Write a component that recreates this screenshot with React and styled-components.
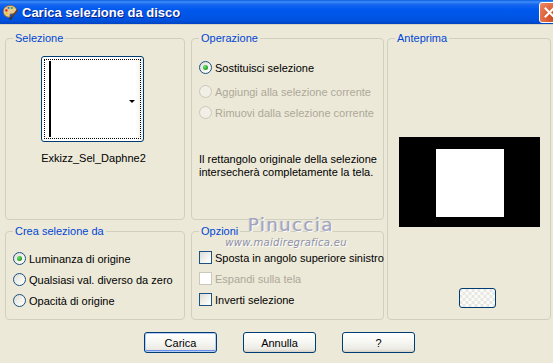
import React from 'react'
import styled, { createGlobalStyle } from 'styled-components'

const GlobalStyle = createGlobalStyle`
  html, body {
    margin: 0;
    padding: 0;
    background: #ECE9D8;
  }
  body {
    font-family: "Liberation Sans", Tahoma, Arial, sans-serif;
    font-size: 11px;
    color: #000;
  }
`

const operations = [
  { label: 'Sostituisci selezione', checked: true },
  { label: 'Aggiungi alla selezione corrente', disabled: true },
  { label: 'Rimuovi dalla selezione corrente', disabled: true },
]

const sources = [
  { label: 'Luminanza di origine', checked: true },
  { label: 'Qualsiasi val. diverso da zero' },
  { label: 'Opacità di origine' },
]

const options = [
  { label: 'Sposta in angolo superiore sinistro' },
  { label: 'Espandi sulla tela', disabled: true },
  { label: 'Inverti selezione' },
]

const AppIcon = () => (
  <svg width="16" height="16" viewBox="0 0 16 16">
    <path d="M8 1.5C4 1.5 1.2 4 1.2 7.4c0 3.4 2.6 5.8 5.6 5.8 1.3 0 1.6-.8 1.2-1.6-.4-.9.1-1.7 1.1-1.7h1.6c2.3 0 3.900-1.3 3.900-3.4C14.6 3.6 11.8 1.5 8 1.5z" fill="#E8C98E" stroke="#7A5A2A" strokeWidth="0.8" />
    <circle cx="4.4" cy="6.4" r="1.2" fill="#D8261B" />
    <circle cx="6.6" cy="3.9" r="1.1" fill="#2A7BE0" />
    <circle cx="9.8" cy="4" r="1.1" fill="#2DA83A" />
    <circle cx="4.6" cy="9.6" r="1.1" fill="#F2C418" />
    <path d="M15 6.5L9 14" stroke="#6B3E1A" strokeWidth="1.6" strokeLinecap="round" />
    <path d="M9.4 13.4L8.2 15.2" stroke="#333" strokeWidth="1.8" strokeLinecap="round" />
  </svg>
)

const CloseIcon = () => (
  <svg width="11" height="11" viewBox="0 0 11 11">
    <path d="M1.5 1.5L9.5 9.5M9.5 1.5L1.5 9.5" stroke="#fff" strokeWidth="2" strokeLinecap="square" />
  </svg>
)

const Radio = ({ label, checked, disabled }) => (
  <OptionRow $disabled={disabled}>
    <RadioMark $checked={checked} $disabled={disabled} />
    {label}
  </OptionRow>
)

const Check = ({ label, disabled }) => (
  <OptionRow $disabled={disabled}>
    <CheckMark $disabled={disabled} />
    {label}
  </OptionRow>
)

const App = () => {
  return (
    <Window>
      <GlobalStyle />
      <TitleBar>
        <AppIcon />
        <Title>Carica selezione da disco</Title>
        <CloseButton><CloseIcon /></CloseButton>
      </TitleBar>

      <Body>
        <Group $area="sel">
          <Legend>Selezione</Legend>
          <Thumb>
            <FocusRect>
              <Canvas>
                <Arrow />
              </Canvas>
            </FocusRect>
          </Thumb>
          <Caption>Exkizz_Sel_Daphne2</Caption>
        </Group>

        <Group $area="op">
          <Legend>Operazione</Legend>
          <OptionList $top={12} $lead={3}>
            {operations.map(op => <Radio key={op.label} {...op} />)}
          </OptionList>
          <Description>
            Il rettangolo originale della selezione<br />
            intersecherà completamente la tela.
          </Description>
        </Group>

        <Group $area="prev">
          <Legend>Anteprima</Legend>
          <Preview>
            <PreviewShape />
          </Preview>
          <SmallButton />
        </Group>

        <Group $area="crea">
          <Legend>Crea selezione da</Legend>
          <OptionList $top={10}>
            {sources.map(s => <Radio key={s.label} {...s} />)}
          </OptionList>
        </Group>

        <Group $area="opt">
          <Legend>Opzioni</Legend>
          <OptionList $top={9}>
            {options.map(o => <Check key={o.label} {...o} />)}
          </OptionList>
        </Group>
      </Body>

      <ButtonRow>
        <Button $default>Carica</Button>
        <Button>Annulla</Button>
        <Button>?</Button>
      </ButtonRow>

      <Watermark>
        <WatermarkName>Pinuccia</WatermarkName>
        <WatermarkUrl>www.maidiregrafica.eu</WatermarkUrl>
      </Watermark>
    </Window>
  )
}

const Window = styled.div`
  position: relative;
  width: 553px;
  height: 363px;
  overflow: hidden;
  background: #ECE9D8;
`

const TitleBar = styled.div`
  height: 25px;
  display: flex;
  align-items: center;
  gap: 4px;
  padding-left: 2px;
  box-sizing: border-box;
  background: linear-gradient(to bottom, #0A5EE6 0%, #3F8DF6 8%, #1667F0 18%, #0058EE 40%, #0055E5 70%, #0050DB 88%, #0043BE 100%);
  border-bottom: 1px solid #D8D4C4;
`

const Title = styled.div`
  font-family: "Liberation Sans", Arial, sans-serif;
  font-weight: bold;
  font-size: 13px;
  color: #fff;
  text-shadow: 1px 1px 0 #0A1E8A;
`

const CloseButton = styled.div`
  margin-left: auto;
  margin-right: -7px;
  width: 21px;
  height: 21px;
  box-sizing: border-box;
  border: 1px solid #fff;
  border-radius: 3px;
  display: flex;
  align-items: center;
  justify-content: center;
  background: radial-gradient(circle at 70% 75%, #CC4622 0%, #E2673F 50%, #EA8A68 100%);
`

const Body = styled.div`
  display: grid;
  grid-template-columns: 180px 6px 193px 3px 164px;
  grid-template-rows: 188px 95px;
  grid-template-areas:
    "sel . op . prev"
    "crea . opt . prev";
  row-gap: 5px;
  padding: 7px 0 0 5px;
`

const Group = styled.fieldset`
  grid-area: ${p => p.$area};
  margin: 0;
  padding: 0 7px;
  min-width: 0;
  box-sizing: border-box;
  border: 1px solid #D0D0BF;
  border-radius: 4px;
  display: flex;
  flex-direction: column;
`

const Legend = styled.legend`
  padding: 0 2px;
  font-size: 11px;
  line-height: 13px;
  color: #0046D5;
`

const Thumb = styled.div`
  margin: 11px 0 0 28px;
  width: 103px;
  height: 86px;
  box-sizing: border-box;
  padding: 2px;
  border: 1px solid #003C74;
  border-radius: 3px;
  background: linear-gradient(to right, #fff 92%, #EDEDE8 100%);
`

const FocusRect = styled.div`
  height: 100%;
  box-sizing: border-box;
  border: 1px dotted #000;
  padding: 1px 3px 1px 4px;
  display: flex;
`

const Canvas = styled.div`
  flex: 1;
  border-left: 2px solid #000;
  display: flex;
  align-items: center;
  justify-content: flex-end;
`

const Arrow = styled.div`
  width: 0;
  height: 0;
  border-left: 3px solid transparent;
  border-right: 3px solid transparent;
  border-top: 3px solid #000;
  margin: 4px 2px 0 0;
`

const Caption = styled.div`
  margin-top: 10px;
  margin-left: -3px;
  line-height: 13px;
  text-align: center;
`

const OptionList = styled.div`
  display: flex;
  flex-direction: column;
  padding-top: ${p => p.$top}px;

  & > :first-child {
    margin-bottom: ${p => p.$lead || 0}px;
  }
`

const OptionRow = styled.div`
  display: flex;
  align-items: center;
  gap: 3px;
  height: 21px;
  color: ${p => (p.$disabled ? '#ACA899' : '#000')};
  white-space: nowrap;
`

const RadioMark = styled.span`
  flex: none;
  width: 13px;
  height: 13px;
  box-sizing: border-box;
  border-radius: 50%;
  border: 1px solid ${p => (p.$disabled ? '#CAC8BB' : '#1C5180')};
  background: ${p => (p.$disabled ? '#F2F0E6' : 'linear-gradient(135deg, #DCDCD7 0%, #F4F4F0 60%, #fff 100%)')};
  display: flex;
  align-items: center;
  justify-content: center;

  &::after {
    content: '';
    display: ${p => (p.$checked ? 'block' : 'none')};
    width: 5px;
    height: 5px;
    border-radius: 50%;
    background: radial-gradient(circle at 35% 35%, #6FE26F 0%, #2AA72A 60%, #1B8B1B 100%);
  }
`

const CheckMark = styled.span`
  flex: none;
  width: 13px;
  height: 13px;
  box-sizing: border-box;
  border: 1px solid ${p => (p.$disabled ? '#CAC8BB' : '#1C5180')};
  background: ${p => (p.$disabled ? '#fff' : 'linear-gradient(135deg, #DCDCD7 0%, #F4F4F0 60%, #fff 100%)')};
`

const Description = styled.div`
  margin-top: 30px;
  line-height: 13px;
  white-space: nowrap;
`

const Preview = styled.div`
  align-self: center;
  margin-top: 92px;
  width: 141px;
  height: 90px;
  background: #000;
  display: flex;
  align-items: center;
  justify-content: center;
  padding-top: 2px;
  box-sizing: border-box;
`

const PreviewShape = styled.div`
  width: 68px;
  height: 68px;
  margin-left: 1px;
  background: #fff;
`

const SmallButton = styled.div`
  align-self: center;
  margin: 61px 0 0 16px;
  width: 37px;
  height: 20px;
  box-sizing: border-box;
  border: 1px solid #003C74;
  border-radius: 3px;
  background:
    repeating-conic-gradient(#E6E6E2 0 25%, #FBFBF9 0 50%) 50% / 6px 6px;
`

const ButtonRow = styled.div`
  display: flex;
  gap: 26px;
  padding: 12px 0 0 144px;
`

const Button = styled.button`
  width: 73px;
  height: 21px;
  padding: 0;
  box-sizing: border-box;
  font-family: "Liberation Sans", Tahoma, Arial, sans-serif;
  font-size: 11px;
  color: #000;
  border: 1px solid #003C74;
  border-radius: 3px;
  background: linear-gradient(to bottom, #FFFFFF 0%, #F6F6F2 50%, #EBEAE4 85%, #D6D0C5 100%);
  box-shadow: ${p => (p.$default ? 'inset 0 0 0 1px #B6CCF6, inset 0 -2px 0 0 #6A8FE6' : 'none')};
`

const Watermark = styled.div`
  position: absolute;
  left: 224px;
  top: 214px;
  width: 124px;
  display: flex;
  flex-direction: column;
  align-items: center;
  pointer-events: none;
`

const WatermarkName = styled.div`
  margin-left: 10px;
  font-family: "DejaVu Sans", sans-serif;
  font-size: 18px;
  line-height: 21px;
  letter-spacing: 1.5px;
  color: #A2A4BC;
  text-shadow: 1px 1px 0 #fff, -1px 0 0 #C8C8D4;
`

const WatermarkUrl = styled.div`
  margin-top: 2px;
  font-family: "DejaVu Sans", sans-serif;
  font-style: italic;
  font-size: 10px;
  line-height: 11px;
  letter-spacing: 0.3px;
  color: #8E90A8;
  text-shadow: 1px 1px 0 #fff;
`

export default App
